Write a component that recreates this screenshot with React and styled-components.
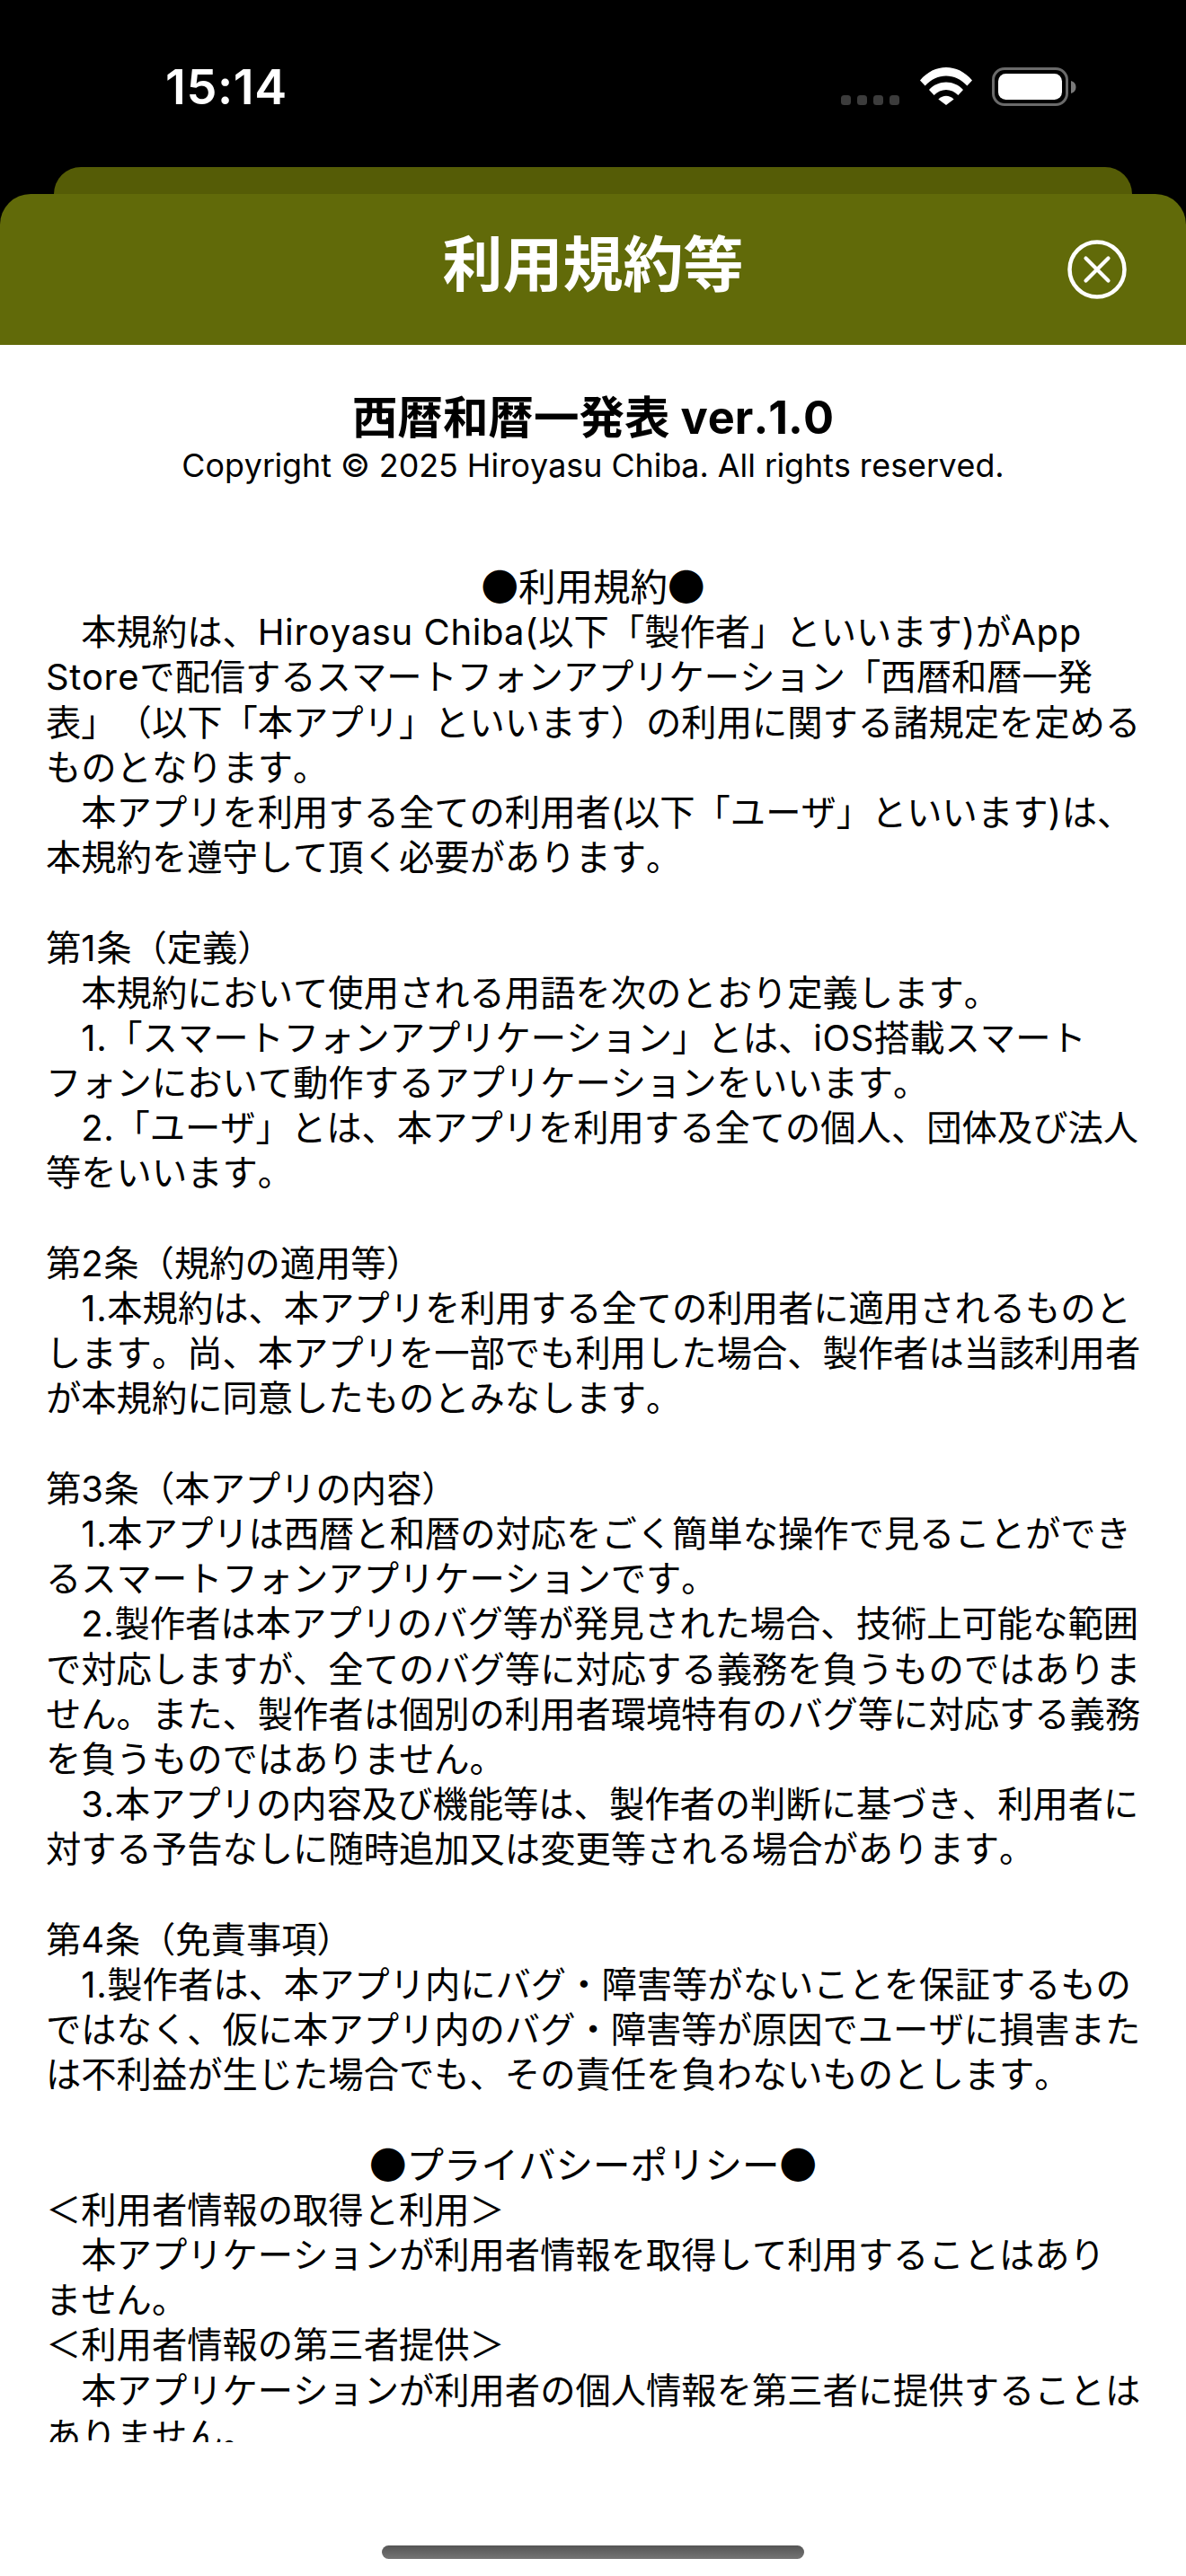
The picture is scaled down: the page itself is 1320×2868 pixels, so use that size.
import React from 'react'
import styled, { createGlobalStyle } from 'styled-components'

const GlobalStyle = createGlobalStyle`
  html, body {
    margin: 0;
    padding: 0;
    background: #ffffff;
  }
  body {
    font-family: Inter, "Noto Sans CJK JP", sans-serif;
    text-spacing-trim: space-all;
    font-kerning: none;
  }
`

const Phone = styled.div`
  width: 1320px;
  height: 2868px;
  display: flex;
  flex-direction: column;
  background: #ffffff;
  overflow: hidden;
`

const TopArea = styled.div`
  height: 384px;
  background: #000000;
  display: flex;
  flex-direction: column;
  flex-shrink: 0;
`

const StatusBar = styled.div`
  height: 186px;
  display: flex;
  justify-content: space-between;
  align-items: flex-start;
  padding: 75px 122px 0 184px;
  box-sizing: border-box;
`

const Clock = styled.div`
  color: #ffffff;
  font-size: 54px;
  font-weight: 600;
  line-height: 44px;
  letter-spacing: 0.6px;
`

const StatusIcons = styled.div`
  display: flex;
  align-items: flex-start;
`

const BackSheet = styled.div`
  height: 198px;
  margin: 0 60px;
  background: #555c06;
  border-radius: 30px 30px 0 0;
  position: relative;
`

const SheetHeader = styled.div`
  position: absolute;
  top: 30px;
  left: -60px;
  width: 1320px;
  height: 168px;
  padding-bottom: 11px;
  box-sizing: border-box;
  background: #616a09;
  border-radius: 34px 34px 0 0;
  display: flex;
  align-items: center;
  justify-content: center;
`

const Title = styled.h1`
  margin: 0;
  color: #ffffff;
  font-size: 67px;
  font-weight: 700;
  line-height: 84px;
`

const CloseButton = styled.button`
  position: absolute;
  right: 66px;
  top: 51px;
  width: 66px;
  height: 66px;
  padding: 0;
  border: 0;
  background: none;
`

const Content = styled.div`
  height: 2335px;
  flex-shrink: 0;
  overflow: hidden;
  padding: 50px 51px 0;
  box-sizing: border-box;
  color: #000000;
`

const AppName = styled.div`
  text-align: center;
  font-size: 50.5px;
  font-weight: 700;
  line-height: 62px;
`

const Copyright = styled.div`
  text-align: center;
  font-size: 35.8px;
  line-height: 44px;
  margin-bottom: 87px;
`

const Line = styled.div`
  font-size: ${({ $center }) => ($center ? '41.5px' : '39.3px')};
  line-height: ${({ $center }) => ($center ? '49px' : '54.4px')};
  height: 50.2px;
  white-space: pre;
  text-align: ${({ $center }) => ($center ? 'center' : 'left')};
  font-family: ${({ $center }) => ($center ? '"Noto Sans CJK JP", sans-serif' : 'inherit')};
`

// latin runs sit a little wider than Inter at the kanji size
const Latin = styled.span`
  font-size: 40px;
  letter-spacing: 0.6px;
`

const HomeBar = styled.div`
  width: 470px;
  height: 15px;
  margin: 115px auto 0;
  border-radius: 8px;
  background: linear-gradient(#555555, #747474);
  flex-shrink: 0;
`

const lines = [
  { text: '●利用規約●', center: true },
  { text: '　本規約は、Hiroyasu Chiba(以下「製作者」といいます)がApp' },
  { text: 'Storeで配信するスマートフォンアプリケーション「西暦和暦一発' },
  { text: '表」（以下「本アプリ」といいます）の利用に関する諸規定を定める' },
  { text: 'ものとなります。' },
  { text: '　本アプリを利用する全ての利用者(以下「ユーザ」といいます)は、' },
  { text: '本規約を遵守して頂く必要があります。' },
  { text: '' },
  { text: '第1条（定義）' },
  { text: '　本規約において使用される用語を次のとおり定義します。' },
  { text: '　1.「スマートフォンアプリケーション」とは、iOS搭載スマート' },
  { text: 'フォンにおいて動作するアプリケーションをいいます。' },
  { text: '　2.「ユーザ」とは、本アプリを利用する全ての個人、団体及び法人' },
  { text: '等をいいます。' },
  { text: '' },
  { text: '第2条（規約の適用等）' },
  { text: '　1.本規約は、本アプリを利用する全ての利用者に適用されるものと' },
  { text: 'します。尚、本アプリを一部でも利用した場合、製作者は当該利用者' },
  { text: 'が本規約に同意したものとみなします。' },
  { text: '' },
  { text: '第3条（本アプリの内容）' },
  { text: '　1.本アプリは西暦と和暦の対応をごく簡単な操作で見ることができ' },
  { text: 'るスマートフォンアプリケーションです。' },
  { text: '　2.製作者は本アプリのバグ等が発見された場合、技術上可能な範囲' },
  { text: 'で対応しますが、全てのバグ等に対応する義務を負うものではありま' },
  { text: 'せん。また、製作者は個別の利用者環境特有のバグ等に対応する義務' },
  { text: 'を負うものではありません。' },
  { text: '　3.本アプリの内容及び機能等は、製作者の判断に基づき、利用者に' },
  { text: '対する予告なしに随時追加又は変更等される場合があります。' },
  { text: '' },
  { text: '第4条（免責事項）' },
  { text: '　1.製作者は、本アプリ内にバグ・障害等がないことを保証するもの' },
  { text: 'ではなく、仮に本アプリ内のバグ・障害等が原因でユーザに損害また' },
  { text: 'は不利益が生じた場合でも、その責任を負わないものとします。' },
  { text: '' },
  { text: '●プライバシーポリシー●', center: true },
  { text: '＜利用者情報の取得と利用＞' },
  { text: '　本アプリケーションが利用者情報を取得して利用することはあり' },
  { text: 'ません。' },
  { text: '＜利用者情報の第三者提供＞' },
  { text: '　本アプリケーションが利用者の個人情報を第三者に提供することは' },
  { text: 'ありません。' },
]

const renderRuns = text =>
  text.split(/([A-Za-z0-9(). ]+)/).map((run, i) =>
    i % 2 === 1 ? <Latin key={i}>{run}</Latin> : run
  )

const CellDots = () => (
  <svg width="66" height="42" viewBox="0 0 66 42">
    {[0, 18, 36, 54].map(x => (
      <rect key={x} x={x} y="31" width="11" height="11" rx="3.5" fill="#3c3c3c" />
    ))}
  </svg>
)

const Wifi = () => (
  <svg width="58" height="42" viewBox="0 0 58 42" style={{ marginLeft: 22 }}>
    <path d="M0 14.5 C16 -4.8 42 -4.8 58 14.5 L52.4 20.5 C39 5.8 19 5.8 5.6 20.5 Z" fill="#fff" />
    <path d="M10 25 C20 13.5 38 13.5 48 25 L42.4 31 C35 23 23 23 15.6 31 Z" fill="#fff" />
    <path d="M20.4 35.6 C25.5 30.6 32.5 30.6 37.6 35.6 L29 42 Z" fill="#fff" />
  </svg>
)

const Battery = () => (
  <svg width="94" height="44" viewBox="0 0 94 44" style={{ marginLeft: 22 }}>
    <rect x="1.5" y="1.5" width="82" height="40" rx="12.5" fill="none" stroke="#6a6a6a" strokeWidth="3" />
    <rect x="7" y="7" width="71" height="29" rx="8.5" fill="#fff" />
    <path d="M88 15 C91.5 16 93.5 18.5 93.5 22 C93.5 25.5 91.5 28 88 29 Z" fill="#7a7a7a" />
  </svg>
)

const CloseIcon = () => (
  <svg width="66" height="66" viewBox="0 0 66 66" fill="none" stroke="#fff">
    <circle cx="33" cy="33" r="30.5" strokeWidth="4.5" />
    <path d="M20.5 20.5 L45.5 45.5 M45.5 20.5 L20.5 45.5" strokeWidth="4.2" strokeLinecap="round" />
  </svg>
)

const App = () => {
  return (
    <Phone>
      <GlobalStyle />
      <TopArea>
        <StatusBar>
          <Clock>15:14</Clock>
          <StatusIcons>
            <CellDots />
            <Wifi />
            <Battery />
          </StatusIcons>
        </StatusBar>
        <BackSheet>
          <SheetHeader>
            <Title>利用規約等</Title>
            <CloseButton aria-label="閉じる">
              <CloseIcon />
            </CloseButton>
          </SheetHeader>
        </BackSheet>
      </TopArea>
      <Content>
        <AppName>西暦和暦一発表 ver.1.0</AppName>
        <Copyright>Copyright © 2025 Hiroyasu Chiba. All rights reserved.</Copyright>
        {lines.map((line, i) => (
          <Line key={i} $center={line.center}>{renderRuns(line.text)}</Line>
        ))}
      </Content>
      <HomeBar />
    </Phone>
  )
}

export default App
